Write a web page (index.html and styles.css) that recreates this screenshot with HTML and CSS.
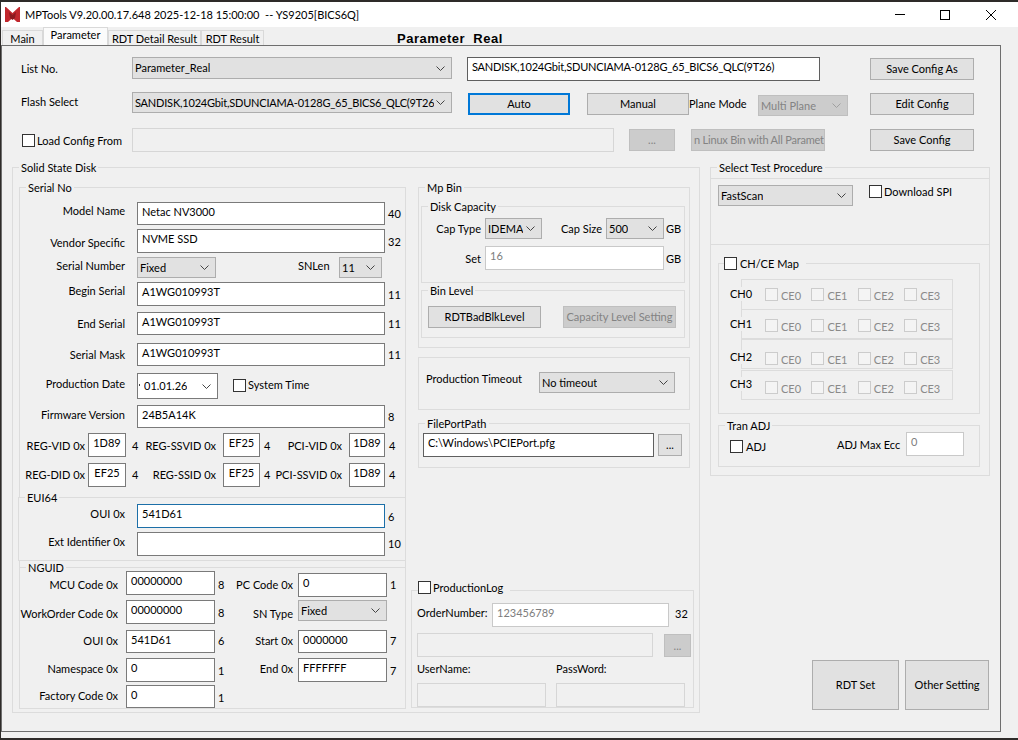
FILE: index.html
```html
<!DOCTYPE html>
<html lang="en">

<head>
    <meta charset="UTF-8">
    <meta name="viewport" content="width=device-width, initial-scale=1.0">
    <title>MPTools</title>
    <link rel="stylesheet" href="styles.css">
</head>

<body>
    <svg class="defs" width="0" height="0">
        <symbol id="chev" viewBox="0 0 9 5">
            <path d="M0.5 0.5 L4.5 4.5 L8.5 0.5" fill="none" stroke="currentColor" stroke-width="1" />
        </symbol>
    </svg>

    <div class="window">
        <div class="titlebar">
            <svg class="logo" width="15" height="15" viewBox="0 0 15 15">
                <rect width="15" height="15" fill="#c1272d" />
                <path d="M1 0 L7.5 6 L14 0 Z M3 15 L7.5 11 L12 15 Z" fill="#fff" />
                <path d="M4 5 L7.5 8 L11 5 L10 11 L7.5 13 L5 11 Z" fill="#8c1a1f" />
            </svg>
            <span class="app-title">MPTools V9.20.00.17.648 2025-12-18 15:00:00&nbsp; -- YS9205[BICS6Q]</span>
            <svg class="win-btn min" width="10" height="10" viewBox="0 0 10 10">
                <path d="M0 4.5 H10" stroke="#000" />
            </svg>
            <svg class="win-btn max" width="10" height="10" viewBox="0 0 10 10">
                <rect x="0.5" y="0.5" width="9" height="9" fill="none" stroke="#000" />
            </svg>
            <svg class="win-btn close" width="10" height="10" viewBox="0 0 10 10">
                <path d="M0 0 L10 10 M10 0 L0 10" stroke="#000" />
            </svg>
        </div>

        <div class="tabs">
            <div class="tab tab-main">Main</div>
            <div class="tab tab-param active">Parameter</div>
            <div class="tab tab-detail">RDT Detail Result</div>
            <div class="tab tab-result">RDT Result</div>
            <div class="page-name">Parameter&nbsp; Real</div>
        </div>

        <div class="panel">
            <!-- 顶部配置 -->
            <div class="row mt11">
                <div class="lbl ml19 w111 t5">List No.</div>
                <div class="combo w320 h22"><span>Parameter_Real</span><svg><use href="#chev" /></svg></div>
                <div class="field dark tight w353 h24 ml15">SANDISK,1024Gbit,SDUNCIAMA-0128G_65_BICS6_QLC(9T26)</div>
                <div class="btn w104 h22 ml50 mt1">Save Config As</div>
            </div>
            <div class="row mt11">
                <div class="lbl ml19 w111 t3">Flash Select</div>
                <div class="combo tight w320 h21"><span>SANDISK,1024Gbit,SDUNCIAMA-0128G_65_BICS6_QLC(9T26</span><svg><use href="#chev" /></svg></div>
                <div class="btn focus w102 h22 ml16 mt1">Auto</div>
                <div class="btn w102 h22 ml17 mt1">Manual</div>
                <div class="lbl w69 t5">Plane Mode</div>
                <div class="combo off w90 h21 mt3"><span>Multi Plane</span><svg><use href="#chev" /></svg></div>
                <div class="btn w104 h22 ml22 mt1">Edit Config</div>
            </div>
            <div class="row mt12">
                <span class="check ml20 mt6"></span>
                <div class="lbl ml2 w95 t6">Load Config From</div>
                <div class="field off w482 h24"></div>
                <div class="btn off w46 h22 ml15 mt1">...</div>
                <div class="btn off clip tight w134 h22 ml16 mt1">n Linux Bin with All Paramet</div>
                <div class="btn w104 h22 ml45 mt1">Save Config</div>
            </div>

            <div class="body">
                <!-- 左边大框 -->
                <div class="group ssd">
                    <div class="legend">Solid State Disk</div>
                    <div class="ssd-inner">
                        <div class="group serial">
                            <div class="legend">Serial No</div>

                            <div class="row mt7">
                                <div class="lbl right w105 t2">Model Name</div>
                                <div class="field w248 h23 ml12">Netac NV3000</div>
                                <div class="lbl ml3 t5">40</div>
                            </div>
                            <div class="row mt4">
                                <div class="lbl right w105 t7">Vendor Specific</div>
                                <div class="field w248 h24 ml12">NVME SSD</div>
                                <div class="lbl ml3 t6">32</div>
                            </div>
                            <div class="row mt4">
                                <div class="lbl right w105 t2">Serial Number</div>
                                <div class="combo w79 h21 ml12"><span>Fixed</span><svg><use href="#chev" /></svg></div>
                                <div class="lbl w41 ml82 t2">SNLen</div>
                                <div class="combo w43 h21"><span>11</span><svg><use href="#chev" /></svg></div>
                            </div>
                            <div class="row mt4">
                                <div class="lbl right w105 t2">Begin Serial</div>
                                <div class="field w248 h24 ml12">A1WG010993T</div>
                                <div class="lbl ml3 t6">11</div>
                            </div>
                            <div class="row mt6">
                                <div class="lbl right w105 t5">End Serial</div>
                                <div class="field w248 h23 ml12">A1WG010993T</div>
                                <div class="lbl ml3 t5">11</div>
                            </div>
                            <div class="row mt8">
                                <div class="lbl right w105 t5">Serial Mask</div>
                                <div class="field w248 h23 ml12">A1WG010993T</div>
                                <div class="lbl ml3 t5">11</div>
                            </div>
                            <div class="row mt7">
                                <div class="lbl right w105 t4">Production Date</div>
                                <div class="combo date w81 h26 ml12"><span>01.01.26</span><svg><use href="#chev" /></svg></div>
                                <span class="check ml15 mt6"></span>
                                <div class="lbl ml2 t5">System Time</div>
                            </div>
                            <div class="row mt6">
                                <div class="lbl right w105 t3">Firmware Version</div>
                                <div class="field w248 h23 ml12">24B5A14K</div>
                                <div class="lbl ml3 t5">8</div>
                            </div>
                            <div class="row mt5">
                                <div class="lbl right w65 t6">REG-VID 0x</div>
                                <div class="field mid w38 h24 ml3">1D89</div>
                                <div class="lbl w8 ml6 t6">4</div>
                                <div class="lbl right w76 t6">REG-SSVID 0x</div>
                                <div class="field mid w37 h24 ml7">EF25</div>
                                <div class="lbl w8 ml4 t6">4</div>
                                <div class="lbl right w70 t6">PCI-VID 0x</div>
                                <div class="field mid w36 h24 ml7">1D89</div>
                                <div class="lbl w8 ml4 t6">4</div>
                            </div>
                            <div class="row mt6">
                                <div class="lbl right w65 t5">REG-DID 0x</div>
                                <div class="field mid w38 h24 ml3">EF25</div>
                                <div class="lbl w8 ml6 t5">4</div>
                                <div class="lbl right w76 t5">REG-SSID 0x</div>
                                <div class="field mid w37 h24 ml7">EF25</div>
                                <div class="lbl w8 ml4 t5">4</div>
                                <div class="lbl right w70 t5">PCI-SSVID 0x</div>
                                <div class="field mid w36 h24 ml7">1D89</div>
                                <div class="lbl w8 ml4 t5">4</div>
                            </div>

                            <div class="group eui">
                                <div class="legend">EUI64</div>
                                <div class="row up1">
                                    <div class="lbl right w106 t3">OUI 0x</div>
                                    <div class="field active w248 h24 ml12">541D61</div>
                                    <div class="lbl ml3 t6">6</div>
                                </div>
                                <div class="row mt4">
                                    <div class="lbl right w106 t3">Ext Identifier 0x</div>
                                    <div class="field w248 h24 ml12"></div>
                                    <div class="lbl ml3 t5">10</div>
                                </div>
                            </div>

                            <div class="nguid">
                                <div class="legend">NGUID</div>
                                <div class="row up4">
                                    <div class="lbl right w98 t7">MCU Code 0x</div>
                                    <div class="field w89 h24 ml8">00000000</div>
                                    <div class="lbl w10 ml3 t7">8</div>
                                    <div class="lbl right w65 t7">PC Code 0x</div>
                                    <div class="field w89 h24 ml5 mt2">0</div>
                                    <div class="lbl ml3 t7">1</div>
                                </div>
                                <div class="row mt3">
                                    <div class="lbl right w98 t7">WorkOrder Code 0x</div>
                                    <div class="field w89 h24 ml8">00000000</div>
                                    <div class="lbl w10 ml3 t6">8</div>
                                    <div class="lbl right w65 t7">SN Type</div>
                                    <div class="combo w89 h21 ml5"><span>Fixed</span><svg><use href="#chev" /></svg></div>
                                </div>
                                <div class="row mt6">
                                    <div class="lbl right w98 t4">OUI 0x</div>
                                    <div class="field w89 h23 ml8">541D61</div>
                                    <div class="lbl w10 ml3 t4">6</div>
                                    <div class="lbl right w65 t4">Start 0x</div>
                                    <div class="field w89 h23 ml5">0000000</div>
                                    <div class="lbl ml3 t4">7</div>
                                </div>
                                <div class="row mt5">
                                    <div class="lbl right w98 t4">Namespace 0x</div>
                                    <div class="field w89 h24 ml8">0</div>
                                    <div class="lbl w10 ml3 t6">1</div>
                                    <div class="lbl right w65 t4">End 0x</div>
                                    <div class="field w89 h24 ml5">FFFFFFF</div>
                                    <div class="lbl ml3 t6">7</div>
                                </div>
                                <div class="row mt3">
                                    <div class="lbl right w98 t4">Factory Code 0x</div>
                                    <div class="field w89 h23 ml8">0</div>
                                    <div class="lbl w10 ml3 t6">1</div>
                                </div>
                            </div>
                        </div>

                        <!-- 中间一列 -->
                        <div class="mid-col">
                            <div class="group mpbin">
                                <div class="legend">Mp Bin</div>
                                <div class="group disk">
                                    <div class="legend">Disk Capacity</div>
                                    <div class="row mt4">
                                        <div class="lbl right w59 t4">Cap Type</div>
                                        <div class="combo w57 h21 ml4"><span>IDEMA</span><svg><use href="#chev" /></svg></div>
                                        <div class="lbl right w60 t4">Cap Size</div>
                                        <div class="combo w58 h21 ml4"><span>500</span><svg><use href="#chev" /></svg></div>
                                        <div class="lbl ml2 t4">GB</div>
                                    </div>
                                    <div class="row mt7">
                                        <div class="lbl right w59 t6">Set</div>
                                        <div class="field light w179 h24 ml4">16</div>
                                        <div class="lbl ml2 t6">GB</div>
                                    </div>
                                </div>
                                <div class="group binlevel">
                                    <div class="legend">Bin Level</div>
                                    <div class="row mt8">
                                        <div class="btn w113 h22 ml6">RDTBadBlkLevel</div>
                                        <div class="btn off w113 h22 ml22">Capacity Level Setting</div>
                                    </div>
                                </div>
                            </div>
                            <div class="group timeout">
                                <div class="row mt14">
                                    <div class="lbl ml7 w113">Production Timeout</div>
                                    <div class="combo w136 h21"><span>No timeout</span><svg><use href="#chev" /></svg></div>
                                </div>
                            </div>
                            <div class="group fileport">
                                <div class="legend">FilePortPath</div>
                                <div class="row mt2">
                                    <div class="field dark w231 h24 ml4">C:\Windows\PCIEPort.pfg</div>
                                    <div class="btn w24 h22 ml4 mt1">...</div>
                                </div>
                            </div>
                            <div class="group prodlog">
                                <div class="legend-check log-check">
                                    <span class="check"></span>
                                    <span class="lbl ml2">ProductionLog</span>
                                </div>
                                <div class="row mt8">
                                    <div class="lbl ml5 w75 t3">OrderNumber:</div>
                                    <div class="field light w177 h24">123456789</div>
                                    <div class="lbl ml6 t4">32</div>
                                </div>
                                <div class="row mt6">
                                    <div class="field off w236 h24 ml5"></div>
                                    <div class="btn off w27 h23 ml11 mt1">...</div>
                                </div>
                                <div class="row mt5">
                                    <div class="lbl ml5 w139">UserName:</div>
                                    <div class="lbl">PassWord:</div>
                                </div>
                                <div class="row mt7">
                                    <div class="field off w129 h24 ml5"></div>
                                    <div class="field off w129 h24 ml10"></div>
                                </div>
                            </div>
                        </div>
                    </div>
                </div>

                <!-- 右边 -->
                <div class="right-col">
                    <div class="group procedure">
                        <div class="legend">Select Test Procedure</div>
                        <div class="proc-top">
                            <div class="row mt6">
                                <div class="combo w135 h21 ml7"><span>FastScan</span><svg><use href="#chev" /></svg></div>
                                <span class="check ml16"></span>
                                <div class="lbl ml2">Download SPI</div>
                            </div>
                        </div>
                        <div class="group chmap">
                            <div class="legend-check map-check">
                                <span class="check"></span>
                                <span class="lbl ml3">CH/CE Map</span>
                            </div>
                            <div class="ch-row ch0">
                                <div class="ch-name">CH0</div>
                                <div class="ch-box">
                                    <div class="ce"><span class="check off"></span><span class="ce-name">CE0</span></div>
                                    <div class="ce"><span class="check off"></span><span class="ce-name">CE1</span></div>
                                    <div class="ce"><span class="check off"></span><span class="ce-name">CE2</span></div>
                                    <div class="ce"><span class="check off"></span><span class="ce-name">CE3</span></div>
                                </div>
                            </div>
                            <div class="ch-row ch1">
                                <div class="ch-name">CH1</div>
                                <div class="ch-box">
                                    <div class="ce"><span class="check off"></span><span class="ce-name">CE0</span></div>
                                    <div class="ce"><span class="check off"></span><span class="ce-name">CE1</span></div>
                                    <div class="ce"><span class="check off"></span><span class="ce-name">CE2</span></div>
                                    <div class="ce"><span class="check off"></span><span class="ce-name">CE3</span></div>
                                </div>
                            </div>
                            <div class="ch-row ch2">
                                <div class="ch-name">CH2</div>
                                <div class="ch-box">
                                    <div class="ce"><span class="check off"></span><span class="ce-name">CE0</span></div>
                                    <div class="ce"><span class="check off"></span><span class="ce-name">CE1</span></div>
                                    <div class="ce"><span class="check off"></span><span class="ce-name">CE2</span></div>
                                    <div class="ce"><span class="check off"></span><span class="ce-name">CE3</span></div>
                                </div>
                            </div>
                            <div class="ch-row ch3">
                                <div class="ch-name">CH3</div>
                                <div class="ch-box">
                                    <div class="ce"><span class="check off"></span><span class="ce-name">CE0</span></div>
                                    <div class="ce"><span class="check off"></span><span class="ce-name">CE1</span></div>
                                    <div class="ce"><span class="check off"></span><span class="ce-name">CE2</span></div>
                                    <div class="ce"><span class="check off"></span><span class="ce-name">CE3</span></div>
                                </div>
                            </div>
                        </div>
                        <div class="group tran">
                            <div class="legend">Tran ADJ</div>
                            <div class="row up1">
                                <span class="check ml11 mt8"></span>
                                <div class="lbl ml3 w91 t8">ADJ</div>
                                <div class="lbl w69 t6">ADJ Max Ecc</div>
                                <div class="field light w58 h24">0</div>
                            </div>
                        </div>
                    </div>
                    <div class="row big-btns">
                        <div class="btn rdt-set">RDT Set</div>
                        <div class="btn other-set">Other Setting</div>
                    </div>
                </div>
            </div>
        </div>
    </div>
</body>

</html>
```

FILE: styles.css
```css
* {
    box-sizing: border-box;
}

html,
body {
    margin: 0;
    padding: 0;
    height: 740px;
    overflow: hidden;
}

body {
    background-color: #2e2b29;
    color: #000;
    font-family: Lato, "Open Sans", sans-serif;
    font-size: 11px;
    line-height: 14px;
}

.defs {
    display: block;
    height: 0;
}

.window {
    margin: 2px 0 0 1px;
    height: 736px;
    background-color: #f0f0f0;
}

/* title bar */
.titlebar {
    display: flex;
    align-items: center;
    height: 25px;
    background-color: #fff;
}

.logo {
    margin-left: 4px;
}

.app-title {
    margin-left: 5px;
    width: 860px;
    white-space: nowrap;
}

.win-btn {
    display: block;
}

.min {
    margin-left: 10px;
}

.max {
    margin-left: 35px;
}

.close {
    margin-left: 36px;
}

/* tabs */
.tabs {
    display: flex;
    align-items: flex-end;
    height: 19px;
    padding-left: 1px;
}

.tab {
    height: 16px;
    border: 1px solid #d9d9d9;
    border-bottom: 0;
    background-color: #f0f0f0;
    text-align: center;
    line-height: 15px;
    white-space: nowrap;
}

.tab.active {
    height: 19px;
    background-color: #fbfbfb;
    line-height: 14px;
}

.tab-main {
    width: 41px;
}

.tab-param {
    width: 65px;
}

.tab-detail {
    width: 93px;
}

.tab-result {
    width: 63px;
}

.page-name {
    margin-left: 133px;
    font-family: "Liberation Sans", sans-serif;
    font-weight: bold;
    font-size: 13px;
    letter-spacing: 0.5px;
    white-space: nowrap;
}

.panel {
    width: 1000px;
    height: 687px;
    border: 1px solid #6e6e6e;
    margin-top: -1px;
    position: relative;
}

/* layout helpers */
.row {
    display: flex;
    align-items: flex-start;
}

.body {
    display: flex;
    margin: 15px 0 0 10px;
}

.group {
    border: 1px solid #dcdcdc;
}

.legend {
    width: fit-content;
    margin: -7px 0 0 6px;
    padding: 0 2px;
    height: 14px;
    background-color: #f0f0f0;
    white-space: nowrap;
}

.legend-check {
    display: flex;
    align-items: flex-start;
    width: fit-content;
    height: 14px;
    background-color: #f0f0f0;
    padding-right: 7px;
}

.log-check {
    margin: -10px 0 0 6px;
}

.map-check {
    margin: -7px 0 0 5px;
    padding-left: 0;
}

.lbl {
    white-space: nowrap;
    height: 14px;
}

.right {
    text-align: right;
}

.tight {
    letter-spacing: -0.2px;
}

/* controls */
.field {
    flex: none;
    border: 1px solid #7a7a7a;
    background-color: #fff;
    padding: 2px 4px 0;
    white-space: nowrap;
    overflow: hidden;
}

.field.dark {
    border-color: #5f5f5f;
}

.field.mid {
    padding: 2px 0 0;
    text-align: center;
}

.field.active {
    border-color: #1c6fa8;
}

.field.light {
    border-color: #c9c9c9;
    color: #7d7d7d;
}

.field.off {
    border-color: #d6d6d6;
    background-color: #f0f0f0;
}

.combo {
    flex: none;
    display: flex;
    align-items: center;
    border: 1px solid #adadad;
    background-color: #e1e1e1;
    padding: 0 6px 0 2px;
    white-space: nowrap;
    overflow: hidden;
}

.combo span {
    overflow: hidden;
    margin-right: auto;
}

.combo svg {
    flex: none;
    width: 9px;
    height: 5px;
    margin-left: 2px;
    color: #444;
}

.combo.off {
    background-color: #ccc;
    border-color: #bfbfbf;
    color: #838383;
}

.combo.off svg {
    color: #a0a0a0;
}

.combo.date {
    border-color: #7a7a7a;
    background-color: #fff;
    padding-left: 1px;
}

.combo.date::before {
    content: "";
    width: 1px;
    height: 2px;
    margin: -3px 4px 0 0;
    background-color: #444;
}

.btn {
    flex: none;
    display: flex;
    align-items: center;
    justify-content: center;
    border: 1px solid #adadad;
    background-color: #e1e1e1;
    white-space: nowrap;
    overflow: hidden;
}

.btn.focus {
    border: 2px solid #0078d7;
}

.btn.off {
    background-color: #ccc;
    border-color: #bfbfbf;
    color: #838383;
}

.btn.clip {
    justify-content: flex-start;
    padding-left: 2px;
}

.check {
    flex: none;
    display: block;
    width: 13px;
    height: 13px;
    border: 1px solid #333;
    background-color: #fff;
}

.check.off {
    border-color: #ccc;
    background-color: #f4f4f4;
}

/* left big box */
.ssd {
    width: 688px;
    height: 546px;
}

.ssd-inner {
    display: flex;
    margin-top: 12px;
}

.serial {
    width: 387px;
    height: 522px;
    margin-left: 6px;
}

.eui {
    position: relative;
    width: 388px;
    height: 64px;
    margin: 10px 0 0 -2px;
    background-color: #f0f0f0;
}

.nguid {
    border-top: 1px solid #dcdcdc;
    margin-top: 6px;
}

.up1 {
    margin-top: -1px;
}

.up4 {
    margin-top: -4px;
}

.mid-col {
    width: 272px;
    margin-left: 12px;
}

.mpbin {
    height: 161px;
}

.disk {
    width: 264px;
    height: 77px;
    margin: 11px 0 0 2px;
}

.binlevel {
    width: 264px;
    height: 48px;
    margin: 7px 0 0 2px;
}

.timeout {
    height: 53px;
    margin-top: 9px;
}

.fileport {
    height: 45px;
    margin-top: 13px;
}

.prodlog {
    width: 283px;
    height: 118px;
    margin: 122px 0 0 -7px;
}

/* right column */
.right-col {
    width: 280px;
    margin-left: 10px;
}

.procedure {
    height: 309px;
}

.proc-top {
    height: 67px;
    margin-top: 3px;
    border-top: 1px solid #dcdcdc;
    border-bottom: 1px solid #dcdcdc;
}

.chmap {
    width: 262px;
    height: 151px;
    margin: 18px 0 0 7px;
}

.ch-row {
    display: flex;
    align-items: flex-start;
}

.ch0 {
    --name-top: 8px;
    --ce-top: 8px;
    height: 31px;
    margin-top: 8px;
}

.ch1 {
    --name-top: 8px;
    --ce-top: 9px;
    height: 30px;
    margin-top: -1px;
}

.ch2 {
    --name-top: 11px;
    --ce-top: 12px;
    height: 30px;
}

.ch3 {
    --name-top: 7px;
    --ce-top: 10px;
    height: 30px;
    margin-top: 1px;
}

.ch-name {
    position: relative;
    width: 22px;
    height: 14px;
    margin: var(--name-top) -11px 0 11px;
    background-color: #f0f0f0;
}

.ch-box {
    display: flex;
    width: 212px;
    height: 100%;
    border: 1px solid #dcdcdc;
    padding: var(--ce-top) 0 0 23px;
}

.ce {
    display: flex;
    width: 46.4px;
}

.ce-name {
    margin: 1px 0 0 3px;
    color: #8a8a8a;
}

.tran {
    width: 262px;
    height: 42px;
    margin: 11px 0 0 7px;
}

.big-btns {
    margin-top: 184px;
}

.rdt-set {
    width: 87px;
    height: 50px;
    margin-left: 102px;
}

.other-set {
    width: 84px;
    height: 50px;
    margin-left: 6px;
}

/* widths */
.w8 { width: 8px; }
.w10 { width: 10px; }
.w24 { width: 24px; }
.w27 { width: 27px; }
.w36 { width: 36px; }
.w37 { width: 37px; }
.w38 { width: 38px; }
.w41 { width: 41px; }
.w43 { width: 43px; }
.w46 { width: 46px; }
.w57 { width: 57px; }
.w58 { width: 58px; }
.w59 { width: 59px; }
.w60 { width: 60px; }
.w65 { width: 65px; }
.w69 { width: 69px; }
.w70 { width: 70px; }
.w75 { width: 75px; }
.w76 { width: 76px; }
.w79 { width: 79px; }
.w81 { width: 81px; }
.w89 { width: 89px; }
.w90 { width: 90px; }
.w91 { width: 91px; }
.w95 { width: 95px; }
.w98 { width: 98px; }
.w102 { width: 102px; }
.w104 { width: 104px; }
.w105 { width: 105px; }
.w106 { width: 106px; }
.w111 { width: 111px; }
.w113 { width: 113px; }
.w129 { width: 129px; }
.w134 { width: 134px; }
.w135 { width: 135px; }
.w136 { width: 136px; }
.w139 { width: 139px; }
.w177 { width: 177px; }
.w179 { width: 179px; }
.w231 { width: 231px; }
.w236 { width: 236px; }
.w248 { width: 248px; }
.w320 { width: 320px; }
.w353 { width: 353px; }
.w482 { width: 482px; }

/* heights */
.h21 { height: 21px; }
.h22 { height: 22px; }
.h23 { height: 23px; }
.h24 { height: 24px; }
.h26 { height: 26px; }

/* margins */
.ml2 { margin-left: 2px; }
.ml3 { margin-left: 3px; }
.ml4 { margin-left: 4px; }
.ml5 { margin-left: 5px; }
.ml6 { margin-left: 6px; }
.ml7 { margin-left: 7px; }
.ml8 { margin-left: 8px; }
.ml10 { margin-left: 10px; }
.ml11 { margin-left: 11px; }
.ml12 { margin-left: 12px; }
.ml15 { margin-left: 15px; }
.ml16 { margin-left: 16px; }
.ml17 { margin-left: 17px; }
.ml19 { margin-left: 19px; }
.ml20 { margin-left: 20px; }
.ml22 { margin-left: 22px; }
.ml45 { margin-left: 45px; }
.ml50 { margin-left: 50px; }
.ml82 { margin-left: 82px; }

.mt1 { margin-top: 1px; }
.mt2 { margin-top: 2px; }
.mt3 { margin-top: 3px; }
.mt4 { margin-top: 4px; }
.mt5 { margin-top: 5px; }
.mt6 { margin-top: 6px; }
.mt7 { margin-top: 7px; }
.mt8 { margin-top: 8px; }
.mt11 { margin-top: 11px; }
.mt12 { margin-top: 12px; }
.mt14 { margin-top: 14px; }
.mt15 { margin-top: 15px; }

/* label top offset inside a row */
.t2 { margin-top: 2px; }
.t3 { margin-top: 3px; }
.t4 { margin-top: 4px; }
.t5 { margin-top: 5px; }
.t6 { margin-top: 6px; }
.t7 { margin-top: 7px; }
.t8 { margin-top: 8px; }
```
